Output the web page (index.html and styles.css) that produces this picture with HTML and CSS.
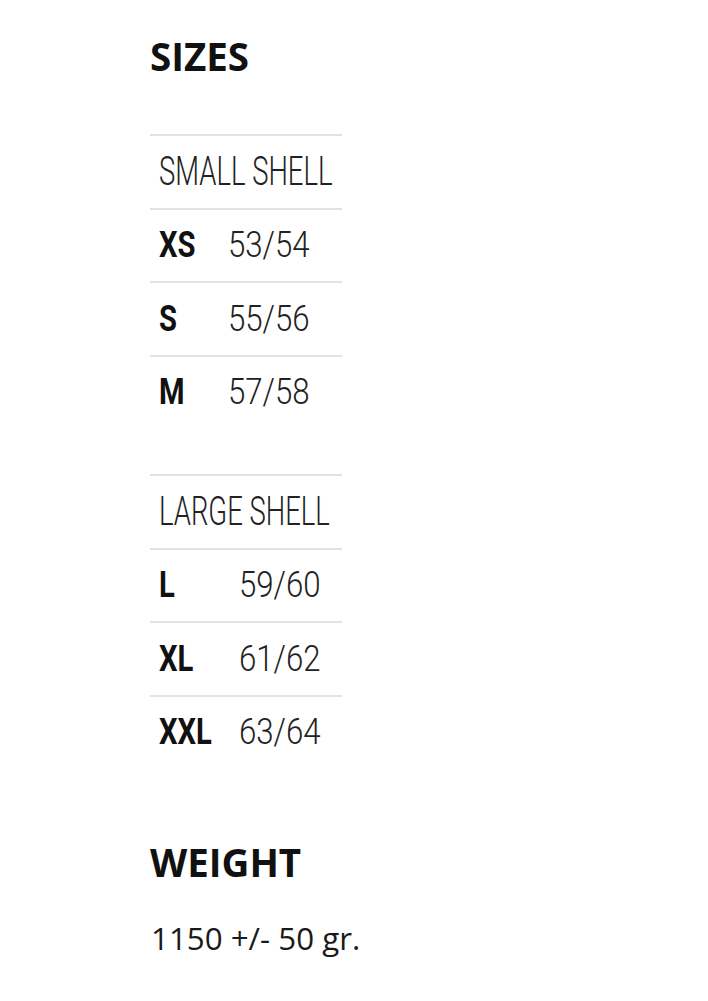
FILE: index.html
```html
<!DOCTYPE html>
<html lang="en">
<head>
<meta charset="utf-8">
<title>Sizes</title>
<link rel="stylesheet" href="styles.css">
</head>
<body>
<main class="spec">
  <h2 class="spec-title">SIZES</h2>

  <div class="size-table size-table--small">
    <div class="size-row size-row--head"><span class="shell">SMALL SHELL</span></div>
    <div class="size-row"><span class="label"><span class="label-text">XS</span></span><span class="val">53/54</span></div>
    <div class="size-row"><span class="label"><span class="label-text">S</span></span><span class="val">55/56</span></div>
    <div class="size-row"><span class="label"><span class="label-text">M</span></span><span class="val">57/58</span></div>
  </div>

  <div class="size-table size-table--large">
    <div class="size-row size-row--head"><span class="shell">LARGE SHELL</span></div>
    <div class="size-row"><span class="label"><span class="label-text">L</span></span><span class="val">59/60</span></div>
    <div class="size-row"><span class="label"><span class="label-text">XL</span></span><span class="val">61/62</span></div>
    <div class="size-row"><span class="label"><span class="label-text">XXL</span></span><span class="val">63/64</span></div>
  </div>

  <h2 class="spec-title spec-title--weight">WEIGHT</h2>
  <p class="spec-text">1150 +/- 50 gr.</p>
</main>
</body>
</html>
```

FILE: styles.css
```css
html, body {
  margin: 0;
  padding: 0;
  background: #ffffff;
}

.spec {
  padding: 37px 0 40px 150px;
  font-family: "Open Sans", "Liberation Sans", sans-serif;
  color: #111;
}

.spec-title {
  margin: 0;
  font-family: "Open Sans", sans-serif;
  font-weight: 700;
  font-size: 38.5px;
  line-height: 38.5px;
  color: #111;
}

.spec-title--weight {
  margin-top: 75px;
}

.spec-text {
  margin: 35.5px 0 0;
  padding-left: 1px;
  font-family: "Open Sans", sans-serif;
  font-size: 31.3px;
  line-height: normal;
  color: #1a1a1a;
}

.size-table {
  width: 192px;
  margin-top: 58.5px;
}

.size-table--large {
  margin-top: 46px;
}

.size-row {
  display: flex;
  align-items: center;
  box-sizing: border-box;
  height: 73.5px;
  border-top: 2px solid #e2e2e2;
  padding-left: 9px;
  font-family: Roboto, "Liberation Sans", sans-serif;
  color: #222;
  line-height: 1;
  white-space: nowrap;
}

.shell {
  display: inline-block;
  font-size: 41px;
  font-weight: 300;
  transform: scaleX(0.67);
  transform-origin: left center;
  color: #222;
}

.label {
  flex: none;
  width: 69px;
}

.size-table--large .label {
  width: 80px;
}

.label-text {
  display: inline-block;
  font-size: 36.5px;
  font-weight: 700;
  transform: scaleX(0.8);
  transform-origin: left center;
  color: #111;
}

.val {
  display: inline-block;
  font-size: 36.5px;
  font-weight: 300;
  transform: scaleX(0.855);
  transform-origin: left center;
  color: #222;
}
```
